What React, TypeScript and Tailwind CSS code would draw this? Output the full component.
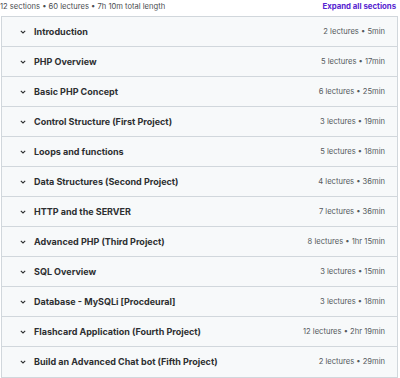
const sections = [
  { title: 'Introduction', meta: '2 lectures • 5min' },
  { title: 'PHP Overview', meta: '5 lectures • 17min' },
  { title: 'Basic PHP Concept', meta: '6 lectures • 25min' },
  { title: 'Control Structure (First Project)', meta: '3 lectures • 19min' },
  { title: 'Loops and functions', meta: '5 lectures • 18min' },
  { title: 'Data Structures (Second Project)', meta: '4 lectures • 36min' },
  { title: 'HTTP and the SERVER', meta: '7 lectures • 36min' },
  { title: 'Advanced PHP (Third Project)', meta: '8 lectures • 1hr 15min' },
  { title: 'SQL Overview', meta: '3 lectures • 15min' },
  { title: 'Database - MySQLi [Procdeural]', meta: '3 lectures • 18min' },
  { title: 'Flashcard Application (Fourth Project)', meta: '12 lectures • 2hr 19min' },
  { title: 'Build an Advanced Chat bot (Fifth Project)', meta: '2 lectures • 29min' },
];

function Chevron() {
  return (
    <svg width="6" height="4" viewBox="0 0 6 4" className="shrink-0">
      <path d="M0.8 0.8 L3 3 L5.2 0.8" fill="none" stroke="#2d2f31" strokeWidth="1.1" />
    </svg>
  );
}

export default function App() {
  return (
    <div className="w-[400px] h-[378px] bg-white text-[#2d2f31] overflow-hidden" style={{ fontFamily: 'Inter, "Noto Sans", sans-serif' }}>
      {/* Header */}
      <div className="flex items-center justify-between h-[14px] pr-[4px]">
        <span className="text-[7.6px] text-[#4a4d50]">12 sections • 60 lectures • 7h 10m total length</span>
        <span className="text-[7.8px] font-bold text-[#5624d0]">Expand all sections</span>
      </div>

      {/* Curriculum */}
      <div className="mt-[2px] ml-[1px] w-[397px] border border-[#d1d7dc]">
        {sections.map((s, i) => (
          <div
            key={s.title}
            className={`flex items-center justify-between h-[30px] bg-[#f7f9fa] pl-[18px] pr-[12px] ${i < sections.length - 1 ? 'border-b border-[#d1d7dc]' : ''}`}
          >
            <div className="flex items-center gap-[8px]">
              <Chevron />
              <span className="text-[9px] font-bold">{s.title}</span>
            </div>
            <span className="text-[7.6px] text-[#55595d]">{s.meta}</span>
          </div>
        ))}
      </div>
    </div>
  );
}
